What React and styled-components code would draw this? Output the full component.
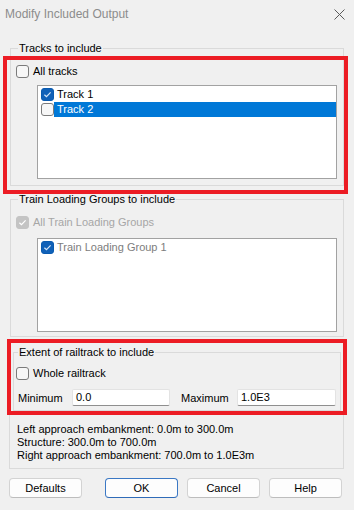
import React from "react";
import styled, { createGlobalStyle } from "styled-components";

const Global = createGlobalStyle`
  html, body { margin: 0; padding: 0; background: #f0f0f0; }
  body {
    font-family: "Liberation Sans", Arial, sans-serif;
    font-size: 11px;
    color: #000;
  }
  * { box-sizing: border-box; }
`;

const Dialog = styled.div`
  position: relative;
  width: 354px;
  height: 510px;
  background: #f0f0f0;
  display: flex;
  flex-direction: column;
  overflow: hidden;
`;

const TitleBar = styled.div`
  height: 28px;
  display: flex;
  align-items: center;
  justify-content: space-between;
  padding: 0 9px 0 5px;
  color: #8c8c8c;
  font-size: 12px;
`;

const Body = styled.div`
  display: flex;
  flex-direction: column;
  padding: 13px 10px 0 10px;
`;

const Group = styled.fieldset`
  margin: ${(p) => p.$mt || 0}px 0 0 0;
  padding: 0 ${(p) => p.$pr ?? 6}px ${(p) => p.$pb ?? 6}px ${(p) => p.$pl ?? 5}px;
  border: 1px solid #dadada;
  border-radius: 0;
  min-width: 0;
  display: flex;
  flex-direction: column;
`;

const Legend = styled.legend`
  margin-left: ${(p) => p.$ml ?? 2}px;
  padding: 0 1px;
  line-height: 14px;
  height: 14px;
  font-size: 11px;
  color: #000;
`;

const OuterBox = styled.div`
  margin: 2px 0 0 -1px;
  border: 1px solid #dadada;
  padding: 5px 2px 6px 3px;
  display: flex;
  flex-direction: column;
`;

const CheckRow = styled.div`
  display: flex;
  align-items: center;
  gap: 4px;
  height: 14px;
  margin-top: ${(p) => p.$mt || 0}px;
  color: ${(p) => (p.$disabled ? "#a6a6a6" : "#000")};
`;

const Box = styled.span`
  flex: none;
  width: 13px;
  height: 13px;
  border-radius: 3px;
  display: inline-flex;
  align-items: center;
  justify-content: center;
  border: 1px solid
    ${(p) => (p.$checked ? (p.$disabled ? "#c4c4c4" : "#0a5bb0") : "#7b7b7b")};
  background: ${(p) =>
    p.$checked ? (p.$disabled ? "#c4c4c4" : "#1061b8") : "#f7f7f7"};
`;

const CheckBox = ({ checked, disabled }) => (
  <Box $checked={checked} $disabled={disabled}>
    {checked && (
      <svg width="11" height="11" viewBox="0 0 11 11">
        <path
          d="M2.4 5.7 L4.5 7.7 L8.6 3.3"
          fill="none"
          stroke={disabled ? "#ffffff" : "#d6e6f7"}
          strokeWidth="1.2"
        />
      </svg>
    )}
  </Box>
);

const ListBox = styled.div`
  margin: ${(p) => p.$mt || 0}px 0 0 21px;
  height: 94px;
  background: #fff;
  border: 1px solid #a2a2a2;
  padding: 1px 0 0 3px;
  display: flex;
  flex-direction: column;
`;

const ListItem = styled.div`
  display: flex;
  align-items: center;
  height: 15px;
`;

const ItemLabel = styled.span`
  flex: 1;
  height: 15px;
  line-height: 15px;
  padding-left: 3px;
  background: ${(p) => (p.$selected ? "#0078d7" : "transparent")};
  color: ${(p) => (p.$selected ? "#fff" : p.$disabled ? "#7d7d7d" : "#000")};
`;

const FieldRow = styled.div`
  display: flex;
  align-items: center;
  height: 17px;
  margin-top: 9px;
  padding-left: 2px;
`;

const FieldLabel = styled.span`
  width: ${(p) => p.$w}px;
  margin-left: ${(p) => p.$ml || 0}px;
`;

const Input = styled.div`
  width: ${(p) => p.$w}px;
  height: 17px;
  background: #fff;
  border: 1px solid #e3e3e3;
  border-bottom-color: #8f8f8f;
  border-radius: 2px;
  padding-left: 3px;
  line-height: 15px;
`;

const InfoText = styled.div`
  margin-top: 12px;
  padding-left: 4px;
  line-height: 13px;
`;

const Buttons = styled.div`
  display: flex;
  margin-top: 9px;
  padding-left: 9px;
  gap: 9px;
`;

const Button = styled.div`
  width: 73px;
  height: 20px;
  margin-right: ${(p) => p.$mr || 0}px;
  display: flex;
  align-items: center;
  justify-content: center;
  background: #fdfdfd;
  border: 1px solid ${(p) => (p.$default ? "#3b78c4" : "#d3d3d3")};
  border-bottom-color: ${(p) => (p.$default ? "#2f6bb8" : "#bdbdbd")};
  border-radius: 4px;
  font-size: 11px;
`;

const Mark = styled.div`
  position: absolute;
  left: ${(p) => p.$x}px;
  top: ${(p) => p.$y}px;
  width: ${(p) => p.$w}px;
  height: ${(p) => p.$h}px;
  border: 4px solid #ec1c24;
  pointer-events: none;
`;

export default function App() {
  return (
    <>
      <Global />
      <Dialog>
        <TitleBar>
          <span>Modify Included Output</span>
          <svg width="11" height="11" viewBox="0 0 11 11">
            <path d="M0.5 0.5 L10.5 10.5 M10.5 0.5 L0.5 10.5" stroke="#5a5a5a" strokeWidth="1" />
          </svg>
        </TitleBar>
        <Body>
          <Group $pb={6}>
            <Legend>Tracks to include</Legend>
            <CheckRow $mt={9}>
              <CheckBox />
              <span>All tracks</span>
            </CheckRow>
            <ListBox $mt={7}>
              <ListItem>
                <CheckBox checked />
                <ItemLabel>Track 1</ItemLabel>
              </ListItem>
              <ListItem>
                <CheckBox />
                <ItemLabel $selected>Track 2</ItemLabel>
              </ListItem>
            </ListBox>
          </Group>
          <Group $mt={6} $pb={4}>
            <Legend>Train Loading Groups to include</Legend>
            <CheckRow $mt={9} $disabled>
              <CheckBox checked disabled />
              <span>All Train Loading Groups</span>
            </CheckRow>
            <ListBox $mt={9}>
              <ListItem>
                <CheckBox checked />
                <ItemLabel $disabled>Train Loading Group 1</ItemLabel>
              </ListItem>
            </ListBox>
          </Group>
          <OuterBox>
            <Group $pl={2} $pr={2} $pb={4}>
              <Legend $ml={2}>Extent of railtrack to include</Legend>
              <CheckRow $mt={7}>
                <CheckBox />
                <span>Whole railtrack</span>
              </CheckRow>
              <FieldRow>
                <FieldLabel $w={54}>Minimum</FieldLabel>
                <Input $w={98}>0.0</Input>
                <FieldLabel $w={56} $ml={11}>Maximum</FieldLabel>
                <Input $w={99}>1.0E3</Input>
              </FieldRow>
            </Group>
            <InfoText>
              <div>Left approach embankment: 0.0m to 300.0m</div>
              <div>Structure: 300.0m to 700.0m</div>
              <div>Right approach embankment: 700.0m to 1.0E3m</div>
            </InfoText>
          </OuterBox>
        </Body>
        <Buttons>
          <Button $mr={14}>Defaults</Button>
          <Button $default>OK</Button>
          <Button>Cancel</Button>
          <Button>Help</Button>
        </Buttons>
        <Mark $x={3} $y={56} $w={345} $h={138} />
        <Mark $x={7} $y={339} $w={340} $h={76} />
      </Dialog>
    </>
  );
}
